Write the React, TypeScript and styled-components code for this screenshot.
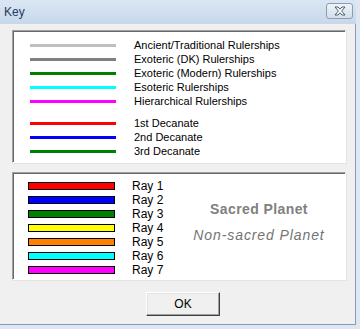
import React from 'react';
import styled, { createGlobalStyle } from 'styled-components';

const GlobalStyle = createGlobalStyle`
  html, body {
    margin: 0;
    padding: 0;
    background: #f0f0f0;
  }
  * {
    box-sizing: border-box;
  }
`;

const rulerships = [
  { label: 'Ancient/Traditional Rulerships', color: '#c0c0c0' },
  { label: 'Exoteric (DK) Rulerships', color: '#808080' },
  { label: 'Exoteric (Modern) Rulerships', color: '#008000' },
  { label: 'Esoteric Rulerships', color: '#00ffff' },
  { label: 'Hierarchical Rulerships', color: '#ff00ff' },
];

const decanates = [
  { label: '1st Decanate', color: '#ff0000' },
  { label: '2nd Decanate', color: '#0000ff' },
  { label: '3rd Decanate', color: '#008000' },
];

const rays = ['#ff0000', '#0000ff', '#008000', '#ffff00', '#ff8000', '#00ffff', '#ff00ff'];

export default function App() {
  return (
    <Window>
      <GlobalStyle />
      <TitleBar>
        <Title>Key</Title>
        <CloseButton aria-label="Close">
          <svg width="14" height="10" viewBox="0 0 14 10">
            <path
              d="M2 1 L5 1 L7 3.2 L9 1 L12 1 L8.6 5 L12 9 L9 9 L7 6.8 L5 9 L2 9 L5.4 5 Z"
              fill="#ffffff"
              stroke="#4a5a6e"
              strokeWidth="1"
              strokeLinejoin="round"
            />
          </svg>
        </CloseButton>
      </TitleBar>
      <Body>
        <Panel $height={133}>
          <LineList>
            <LineGroup>
              {rulerships.map(r => (
                <LineRow key={r.label}>
                  <Stroke $color={r.color} />
                  <RowLabel>{r.label}</RowLabel>
                </LineRow>
              ))}
            </LineGroup>
            <LineGroup>
              {decanates.map(r => (
                <LineRow key={r.label}>
                  <Stroke $color={r.color} />
                  <RowLabel>{r.label}</RowLabel>
                </LineRow>
              ))}
            </LineGroup>
          </LineList>
        </Panel>
        <Panel $height={108}>
          <RayPanel>
            <RayList>
              {rays.map((c, i) => (
                <RayRow key={c + i}>
                  <RayBar $color={c} />
                  <RayLabel>Ray {i + 1}</RayLabel>
                </RayRow>
              ))}
            </RayList>
            <PlanetLegend>
              <SacredText>Sacred Planet</SacredText>
              <NonSacredText>Non-sacred Planet</NonSacredText>
            </PlanetLegend>
          </RayPanel>
        </Panel>
        <Footer>
          <OkButton>OK</OkButton>
        </Footer>
      </Body>
    </Window>
  );
}

const Window = styled.div`
  width: 360px;
  height: 329px;
  background: #f0f0f0;
  display: flex;
  flex-direction: column;
  font-family: "Liberation Sans", Arial, sans-serif;
  border-right: 4px solid #dfe8f2;
  border-bottom: 4px solid #dfe8f2;
  box-shadow: inset -1px -1px 0 #8a9bb0;
  overflow: hidden;
`;

const TitleBar = styled.div`
  height: 24px;
  flex: none;
  display: flex;
  align-items: center;
  justify-content: space-between;
  padding: 0 3px 0 4px;
  background: linear-gradient(to bottom, #dbe6f3, #c7d8ea);
`;

const Title = styled.span`
  font-family: "Liberation Sans", Arial, sans-serif;
  font-size: 12px;
  color: #1e3a5c;
`;

const CloseButton = styled.button`
  width: 27px;
  height: 16px;
  margin-top: -2px;
  padding: 0;
  display: flex;
  align-items: center;
  justify-content: center;
  border: 1px solid #8c9db2;
  border-radius: 3px;
  background: linear-gradient(to bottom, #eef3f9, #d3deeb);
`;

const Body = styled.div`
  flex: 1;
  display: flex;
  flex-direction: column;
  gap: 9px;
  padding: 6px 10px 0 12px;
`;

const Panel = styled.div<{ $height: number }>`
  height: ${p => p.$height}px;
  flex: none;
  background: #ffffff;
  border-top: 1px solid #a0a0a0;
  border-left: 1px solid #a0a0a0;
  border-right: 1px solid #ffffff;
  border-bottom: 1px solid #ffffff;
  box-shadow: inset 1px 1px 0 #696969, 1px 1px 0 #e3e3e3;
`;

const LineList = styled.div`
  display: flex;
  flex-direction: column;
  gap: 8px;
  padding: 7px 0 0 17px;
`;

const LineGroup = styled.div`
  display: flex;
  flex-direction: column;
`;

const LineRow = styled.div`
  height: 14px;
  display: flex;
  align-items: center;
  gap: 18px;
`;

const Stroke = styled.div<{ $color: string }>`
  width: 86px;
  height: 3px;
  background: ${p => p.$color};
`;

const RowLabel = styled.span`
  font-size: 11px;
  color: #000000;
  white-space: nowrap;
`;

const RayPanel = styled.div`
  height: 100%;
  display: grid;
  grid-template-columns: 160px 1fr;
`;

const RayList = styled.div`
  display: flex;
  flex-direction: column;
  padding: 6px 0 0 15px;
`;

const RayRow = styled.div`
  height: 14px;
  display: flex;
  align-items: center;
  gap: 17px;
`;

const RayBar = styled.div<{ $color: string }>`
  width: 87px;
  height: 8px;
  background: ${p => p.$color};
  border: 1px solid #000000;
`;

const RayLabel = styled.span`
  font-size: 12px;
  color: #000000;
  white-space: nowrap;
`;

const PlanetLegend = styled.div`
  display: flex;
  flex-direction: column;
  align-items: center;
  padding-top: 28px;
  gap: 10px;
`;

const SacredText = styled.span`
  font-size: 14px;
  font-weight: bold;
  color: #808080;
  letter-spacing: 0.4px;
`;

const NonSacredText = styled.span`
  font-size: 14px;
  font-style: italic;
  color: #747474;
  letter-spacing: 0.9px;
`;

const Footer = styled.div`
  display: flex;
  justify-content: center;
  padding: 3px 0 0 8px;
`;

const OkButton = styled.button`
  width: 74px;
  height: 24px;
  font-family: "Liberation Sans", Arial, sans-serif;
  font-size: 12px;
  color: #000000;
  background: #f0f0f0;
  border: 1px solid;
  border-color: #ffffff #404040 #404040 #ffffff;
  box-shadow: inset -1px -1px 0 #a0a0a0, inset 1px 1px 0 #e3e3e3;
  padding: 0;
`;
